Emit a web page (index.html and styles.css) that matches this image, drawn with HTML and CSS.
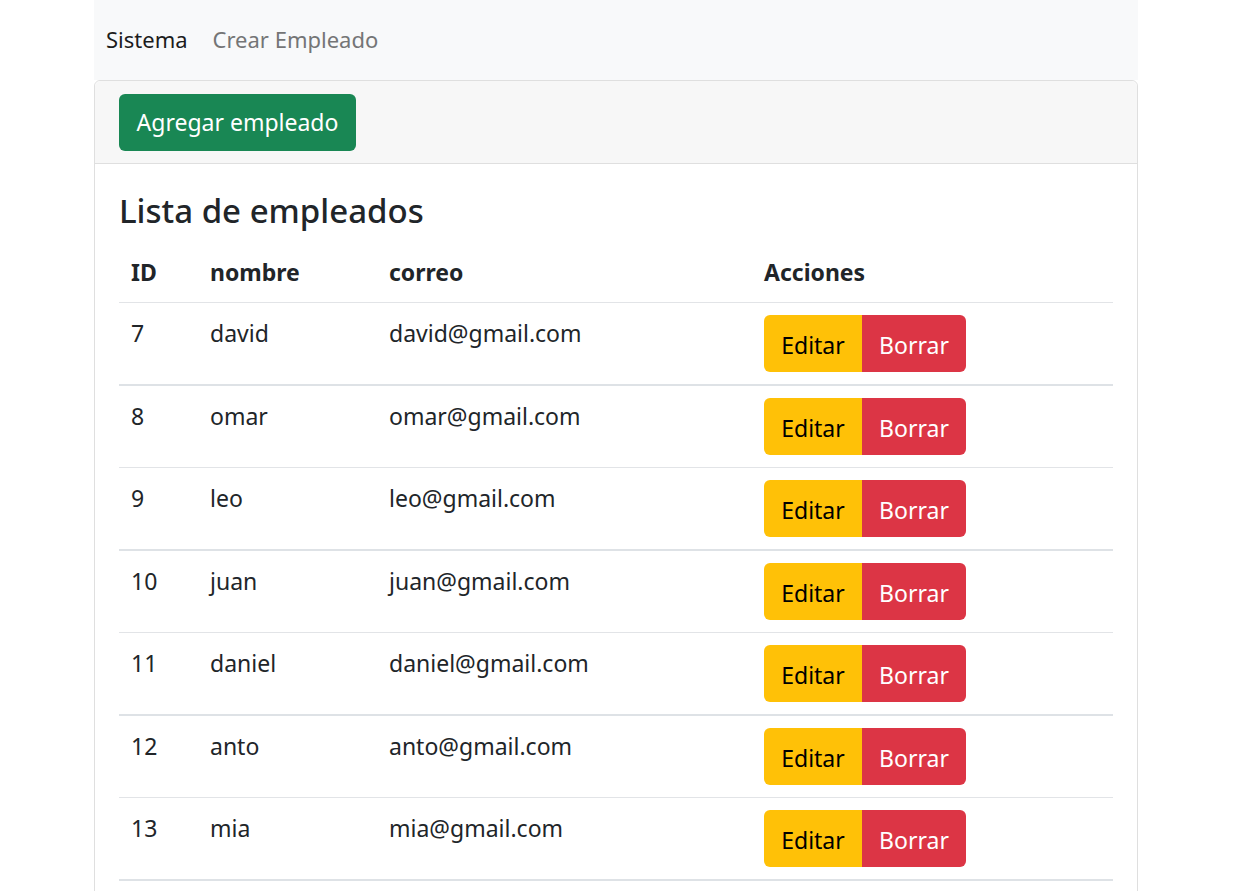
FILE: index.html
```html
<!DOCTYPE html>
<html lang="es">
<head>
<meta charset="utf-8">
<title>Sistema</title>
<link rel="stylesheet" href="styles.css">
</head>
<body>
<div class="page">
  <nav class="navbar">
    <a class="brand" href="#">Sistema</a>
    <a class="nav-link" href="#">Crear Empleado</a>
  </nav>
  <div class="card">
    <div class="card-header">
      <a class="btn btn-success" href="#">Agregar empleado</a>
    </div>
    <div class="card-body">
      <h4 class="card-title">Lista de empleados</h4>
      <table class="table">
        <thead>
          <tr>
            <th class="col-id">ID</th>
            <th class="col-name">nombre</th>
            <th class="col-mail">correo</th>
            <th>Acciones</th>
          </tr>
        </thead>
        <tbody>
          <tr><td>7</td><td>david</td><td>david@gmail.com</td><td><div class="btn-group"><a class="btn btn-warning" href="#">Editar</a><a class="btn btn-danger" href="#">Borrar</a></div></td></tr>
          <tr><td>8</td><td>omar</td><td>omar@gmail.com</td><td><div class="btn-group"><a class="btn btn-warning" href="#">Editar</a><a class="btn btn-danger" href="#">Borrar</a></div></td></tr>
          <tr><td>9</td><td>leo</td><td>leo@gmail.com</td><td><div class="btn-group"><a class="btn btn-warning" href="#">Editar</a><a class="btn btn-danger" href="#">Borrar</a></div></td></tr>
          <tr><td>10</td><td>juan</td><td>juan@gmail.com</td><td><div class="btn-group"><a class="btn btn-warning" href="#">Editar</a><a class="btn btn-danger" href="#">Borrar</a></div></td></tr>
          <tr><td>11</td><td>daniel</td><td>daniel@gmail.com</td><td><div class="btn-group"><a class="btn btn-warning" href="#">Editar</a><a class="btn btn-danger" href="#">Borrar</a></div></td></tr>
          <tr><td>12</td><td>anto</td><td>anto@gmail.com</td><td><div class="btn-group"><a class="btn btn-warning" href="#">Editar</a><a class="btn btn-danger" href="#">Borrar</a></div></td></tr>
          <tr><td>13</td><td>mia</td><td>mia@gmail.com</td><td><div class="btn-group"><a class="btn btn-warning" href="#">Editar</a><a class="btn btn-danger" href="#">Borrar</a></div></td></tr>
        </tbody>
      </table>
    </div>
  </div>
</div>
</body>
</html>
```

FILE: styles.css
```css
* { box-sizing: border-box; }

html, body {
  margin: 0;
  background: #fff;
}

body {
  font-family: "Noto Sans", "Open Sans", sans-serif;
  font-size: 23px;
  line-height: 36px;
  color: #212529;
}

a { text-decoration: none; }

.page {
  width: 1044px;
  margin-left: 94px;
}

.navbar {
  height: 80px;
  background: #f8f9fa;
  padding: 0 12px 2px;
  display: flex;
  align-items: center;
  gap: 25px;
}

.brand {
  color: #1c1c1c;
  font-size: 22px;
}

.nav-link {
  color: #747576;
  font-size: 22px;
}

.card {
  border: 1px solid #dfdfdf;
  border-radius: 6px 6px 0 0;
  height: 830px;
}

.card-header {
  display: flex;
  align-items: center;
  height: 83px;
  background: #f7f7f7;
  border-bottom: 1px solid #dfdfdf;
  border-radius: 6px 6px 0 0;
  padding: 0 24px;
}

.card-body {
  padding: 24px 24px 0;
}

.card-title {
  margin: 0 0 12px;
  padding-top: 2px;
  height: 42px;
  font-size: 33px;
  line-height: 42px;
  font-weight: 500;
}

.btn {
  display: inline-flex;
  align-items: center;
  justify-content: center;
  height: 57px;
  padding: 0 12px;
  border-radius: 6px;
  font-size: 23px;
  line-height: 36px;
  white-space: nowrap;
}

.btn-success {
  background: #198754;
  color: #fff;
  width: 237px;
}

.btn-group {
  display: inline-flex;
}

.btn-group .btn { border-radius: 0; }
.btn-group .btn:first-child { border-radius: 6px 0 0 6px; }
.btn-group .btn:last-child { border-radius: 0 6px 6px 0; }

.btn-warning {
  background: #ffc107;
  color: #000;
  width: 98px;
  padding-top: 2px;
}

.btn-danger {
  background: #dc3545;
  color: #fff;
  width: 104px;
  padding-top: 2px;
}

.table {
  width: 994px;
  border-collapse: collapse;
}

.table th,
.table td {
  text-align: left;
  vertical-align: top;
  padding: 12px;
}

.table th {
  font-weight: 700;
  border-bottom: 1px solid #e2e4e7;
}

.col-id { width: 79px; }
.col-name { width: 179px; }
.col-mail { width: 375px; }

.table tbody tr:nth-child(odd) td { border-bottom: 2px solid #dee2e6; }
.table tbody tr:nth-child(even) td { border-bottom: 1px solid #e2e4e7; }
```
